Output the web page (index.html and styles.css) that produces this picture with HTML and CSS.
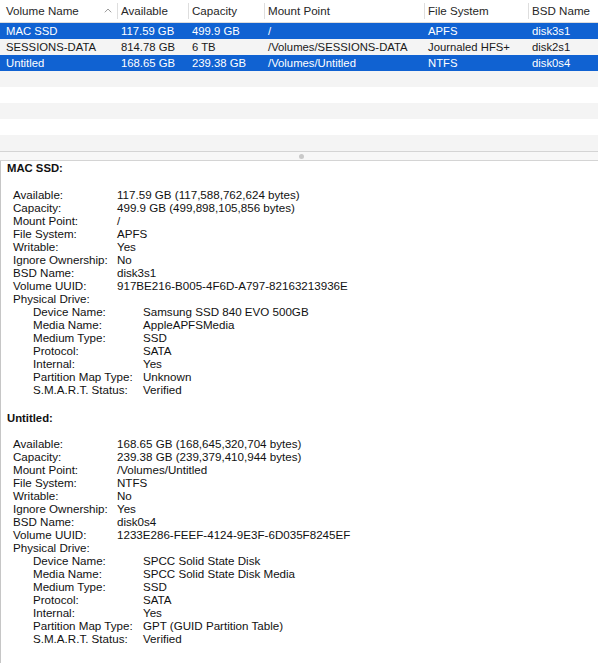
FILE: index.html
```html
<!DOCTYPE html>
<html>
<head>
<meta charset="utf-8">
<link rel="stylesheet" href="styles.css">
</head>
<body>
<div class="app">
  <div class="table">
    <div class="row head">
      <div class="cell first">Volume Name<span class="sort"><svg width="8" height="5" viewBox="0 0 8 5"><path d="M0.8 4.3 L4 1 L7.2 4.3" fill="none" stroke="#9a9a9a" stroke-width="1"/></svg></span></div>
      <div class="cell sep">Available</div>
      <div class="cell sep">Capacity</div>
      <div class="cell sep">Mount Point</div>
      <div class="cell sep">File System</div>
      <div class="cell sep">BSD Name</div>
    </div>
    <div class="row sel">
      <div class="cell first">MAC SSD</div>
      <div class="cell">117.59 GB</div>
      <div class="cell">499.9 GB</div>
      <div class="cell">/</div>
      <div class="cell">APFS</div>
      <div class="cell">disk3s1</div>
    </div>
    <div class="row odd">
      <div class="cell first">SESSIONS-DATA</div>
      <div class="cell">814.78 GB</div>
      <div class="cell">6 TB</div>
      <div class="cell">/Volumes/SESSIONS-DATA</div>
      <div class="cell">Journaled HFS+</div>
      <div class="cell">disk2s1</div>
    </div>
    <div class="row sel">
      <div class="cell first">Untitled</div>
      <div class="cell">168.65 GB</div>
      <div class="cell">239.38 GB</div>
      <div class="cell">/Volumes/Untitled</div>
      <div class="cell">NTFS</div>
      <div class="cell">disk0s4</div>
    </div>
    <div class="row odd empty"></div>
    <div class="row empty"></div>
    <div class="row odd empty"></div>
    <div class="row empty"></div>
    <div class="row odd empty"></div>
  </div>
  <div class="splitter"><span class="dot"></span></div>
  <div class="details">
    <div class="title">MAC SSD:</div>
    <div class="kv">
      <div>Available:</div><div>117.59 GB (117,588,762,624 bytes)</div>
      <div>Capacity:</div><div>499.9 GB (499,898,105,856 bytes)</div>
      <div>Mount Point:</div><div>/</div>
      <div>File System:</div><div>APFS</div>
      <div>Writable:</div><div>Yes</div>
      <div>Ignore Ownership:</div><div>No</div>
      <div>BSD Name:</div><div>disk3s1</div>
      <div>Volume UUID:</div><div>917BE216-B005-4F6D-A797-82163213936E</div>
      <div class="span">Physical Drive:</div>
    </div>
    <div class="kv nested">
      <div>Device Name:</div><div>Samsung SSD 840 EVO 500GB</div>
      <div>Media Name:</div><div>AppleAPFSMedia</div>
      <div>Medium Type:</div><div>SSD</div>
      <div>Protocol:</div><div>SATA</div>
      <div>Internal:</div><div>Yes</div>
      <div>Partition Map Type:</div><div>Unknown</div>
      <div>S.M.A.R.T. Status:</div><div>Verified</div>
    </div>
    <div class="title second">Untitled:</div>
    <div class="kv">
      <div>Available:</div><div>168.65 GB (168,645,320,704 bytes)</div>
      <div>Capacity:</div><div>239.38 GB (239,379,410,944 bytes)</div>
      <div>Mount Point:</div><div>/Volumes/Untitled</div>
      <div>File System:</div><div>NTFS</div>
      <div>Writable:</div><div>No</div>
      <div>Ignore Ownership:</div><div>Yes</div>
      <div>BSD Name:</div><div>disk0s4</div>
      <div>Volume UUID:</div><div>1233E286-FEEF-4124-9E3F-6D035F8245EF</div>
      <div class="span">Physical Drive:</div>
    </div>
    <div class="kv nested">
      <div>Device Name:</div><div>SPCC Solid State Disk</div>
      <div>Media Name:</div><div>SPCC Solid State Disk Media</div>
      <div>Medium Type:</div><div>SSD</div>
      <div>Protocol:</div><div>SATA</div>
      <div>Internal:</div><div>Yes</div>
      <div>Partition Map Type:</div><div>GPT (GUID Partition Table)</div>
      <div>S.M.A.R.T. Status:</div><div>Verified</div>
    </div>
  </div>
</div>
</body>
</html>
```
FILE: styles.css
```css
html, body {
  margin: 0;
  padding: 0;
  background: #ffffff;
}
body {
  font-family: "Liberation Sans", Arial, sans-serif;
  font-size: 11.3px;
  color: #1a1a1a;
  width: 598px;
  height: 663px;
  overflow: hidden;
}
.app {
  display: flex;
  flex-direction: column;
  height: 663px;
}
.table {
  display: flex;
  flex-direction: column;
  background: #ffffff;
}
.row {
  display: grid;
  grid-template-columns: 117px 71px 76px 160px 104px 70px;
  height: 16px;
  align-items: center;
  white-space: nowrap;
}
.row.odd {
  background: #f4f4f4;
}
.row.sel {
  background: #1062d2;
  color: #ffffff;
}
.row.head {
  height: 22px;
  background: #ffffff;
  border-bottom: 1px solid #dcdcdc;
  color: #262626;
  font-size: 11.6px;
}
.cell {
  padding-left: 4px;
  overflow: hidden;
  line-height: 16px;
}
.cell.first {
  padding-left: 6px;
}
.head .cell {
  line-height: 16px;
  position: relative;
}
.head .cell.sep {
  border-left: 1px solid #dedede;
  padding-left: 3px;
}
.sort {
  position: absolute;
  left: 104px;
  top: 5px;
  display: block;
  line-height: 0;
}
.splitter {
  height: 8px;
  border-top: 1px solid #d4d4d4;
  border-bottom: 1px solid #d4d4d4;
  background: #f7f7f7;
  display: flex;
  align-items: center;
  justify-content: center;
}
.dot {
  width: 5px;
  height: 5px;
  border-radius: 50%;
  background: #c9c9c9;
  margin-left: 4px;
}
.details {
  flex: 1;
  border-left: 1px solid #c6c6c6;
  padding: 1px 0 0 6px;
  line-height: 13px;
  color: #111111;
}
.title {
  font-weight: bold;
  margin-bottom: 13px;
  line-height: 13px;
}
.title.second {
  margin-bottom: 12px;
}
.kv {
  display: grid;
  grid-template-columns: 104px auto;
  margin-left: 6px;
  white-space: nowrap;
  font-size: 11.6px;
}
.kv .span {
  grid-column: 1 / 3;
}
.kv.nested {
  margin-left: 26px;
  grid-template-columns: 110px auto;
  margin-bottom: 16px;
}
```
